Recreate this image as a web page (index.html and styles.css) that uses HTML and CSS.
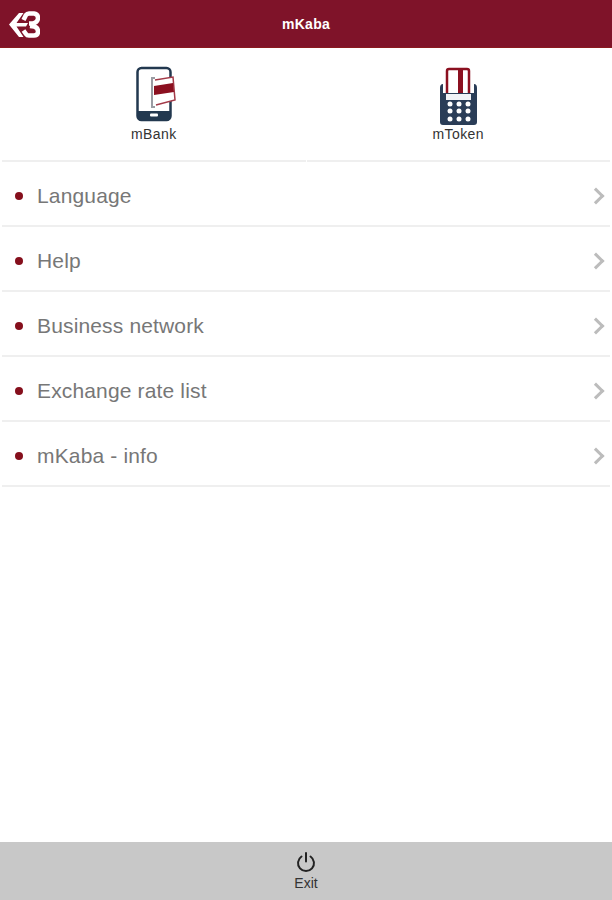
FILE: index.html
```html
<!DOCTYPE html>
<html lang="en">
  <head>
    <meta charset="UTF-8" />
    <meta name="viewport" content="width=device-width, initial-scale=1.0" />
    <title>mKaba</title>
    <link rel="stylesheet" href="styles.css">
  </head>

  <body>
    <header class="top-bar">
      <svg class="logo" width="32" height="28" viewBox="0 0 32 28">
        <path d="M11 2 L15.500 2 L8.500 12 L20 12 L18 15.500 L8.500 15.500 L15.500 26 L11 26 L1 13.500 Z" fill="#fff" />
        <path d="M15.500 9 L18 4 Q19 2.500 21 2.500 L26 2.500 Q30 3 30 7 Q30 11 25 12.500 L21 12.500" fill="none" stroke="#fff" stroke-width="4.500" />
        <path d="M20 8 L25 7.500" fill="none" stroke="#7f1329" stroke-width="1.500" />
        <path d="M22 15 L26 15.500 Q30 16.500 30 20.500 Q30 24.500 26 24.500 L21 24.500 Q19 24.500 18 23 L15.500 19.500" fill="none" stroke="#fff" stroke-width="4.500" />
        <path d="M20 20.500 L25 21" fill="none" stroke="#7f1329" stroke-width="1.500" />
      </svg>
      <h1>mKaba</h1>
    </header>

    <section class="tiles">
      <a class="tile">
        <svg class="phone-icon" width="44" height="56" viewBox="0 0 44 56">
          <rect x="5.500" y="2" width="33" height="52" rx="4" fill="#fff" stroke="#22384f" stroke-width="2.500" />
          <rect x="6" y="45" width="32" height="8" fill="#22384f" />
          <rect x="18" y="47.500" width="8" height="3" rx="1" fill="#fff" />
          <path d="M23 12 L20 12 L20 41 L23 41" fill="none" stroke="#9a9ca3" stroke-width="2" />
          <path d="M23 14 L41 11 L43 34 L24 39" fill="#fff" stroke="#a33a48" stroke-width="1.500" />
          <path d="M22 20 L41 17 L42 26 L22 29 Z" fill="#8b1020" />
        </svg>
        <span>mBank</span>
      </a>
      <a class="tile">
        <svg width="44" height="58" viewBox="-1 0 44 58">
          <rect x="10" y="2" width="22" height="26" rx="2" fill="#fff" stroke="#8b1020" stroke-width="2.500" />
          <rect x="21" y="3" width="5" height="25" fill="#8b1020" />
          <path d="M3 21 Q3 17 6 17 L6 26 L37 26 L37 17 Q40 17 40 21 L40 55 Q40 58 37 58 L6 58 Q3 58 3 55 Z" fill="#2a3d57" />
          <rect x="9" y="27" width="25" height="6" fill="#f1f3f7" />
          <g fill="#fff">
            <circle cx="13" cy="37" r="2.500" /><circle cx="22" cy="37" r="2.500" /><circle cx="31" cy="37" r="2.500" />
            <circle cx="13" cy="44" r="2.500" /><circle cx="22" cy="44" r="2.500" /><circle cx="31" cy="44" r="2.500" />
            <circle cx="13" cy="52" r="2.500" /><circle cx="22" cy="52" r="2.500" /><circle cx="31" cy="52" r="2.500" />
          </g>
        </svg>
        <span>mToken</span>
      </a>
    </section>

    <ul class="menu">
      <li class="menu-item"><span class="dot"></span><span class="menu-label">Language</span><span class="chevron"></span></li>
      <li class="menu-item"><span class="dot"></span><span class="menu-label">Help</span><span class="chevron"></span></li>
      <li class="menu-item"><span class="dot"></span><span class="menu-label">Business network</span><span class="chevron"></span></li>
      <li class="menu-item"><span class="dot"></span><span class="menu-label">Exchange rate list</span><span class="chevron"></span></li>
      <li class="menu-item"><span class="dot"></span><span class="menu-label">mKaba - info</span><span class="chevron"></span></li>
    </ul>

    <footer class="bottom-bar">
      <svg width="22" height="22" viewBox="0 0 22 22">
        <path d="M6.500 5.500 A8 8 0 1 0 15.500 5.500" fill="none" stroke="#222" stroke-width="2" stroke-linecap="round" />
        <path d="M11 2 L11 10.500" fill="none" stroke="#222" stroke-width="2" stroke-linecap="round" />
      </svg>
      <span>Exit</span>
    </footer>
  </body>
</html>
```

FILE: styles.css
```css
* {
  padding: 0;
  margin: 0;
  box-sizing: border-box;
}

body {
  display: flex;
  flex-direction: column;
  height: 100vh;
  background-color: #ffffff;
  font-family: "Liberation Sans", Arial, sans-serif;
}

.top-bar {
  display: flex;
  justify-content: center;
  align-items: center;
  position: relative;
  height: 48px;
  background-color: #7f1329;
  border-bottom: 1px solid #8a1a1e;
}

.top-bar h1 {
  font-size: 14px;
  font-weight: 700;
  letter-spacing: 0.3px;
  color: #ffffff;
}

.logo {
  position: absolute;
  left: 8px;
  top: 11px;
}

.tiles {
  display: flex;
  gap: 1px;
  height: 114px;
  padding: 0 2px;
}

.tile {
  display: flex;
  flex: 1;
  flex-direction: column;
  align-items: center;
  justify-content: flex-end;
  gap: 1px;
  padding-bottom: 18px;
  border-bottom: 2px solid #efefef;
  font-size: 14px;
  letter-spacing: 0.4px;
  color: #333333;
}

.phone-icon {
  margin-bottom: 3px;
}

.menu {
  list-style: none;
}

.menu-item {
  display: flex;
  align-items: center;
  height: 65px;
  margin: 0 2px;
  padding: 4px 5px 0 13px;
  border-bottom: 2px solid #efefef;
}

.dot {
  width: 8px;
  height: 8px;
  border-radius: 50%;
  background-color: #850f1c;
}

.menu-label {
  flex: 1;
  margin-left: 14px;
  font-size: 21px;
  letter-spacing: 0.15px;
  color: #777777;
}

.chevron {
  width: 12px;
  height: 12px;
  margin-right: 3px;
  border-top: 3px solid #bcbcbc;
  border-right: 3px solid #bcbcbc;
  transform: rotate(45deg);
}

.bottom-bar {
  display: flex;
  flex-direction: column;
  align-items: center;
  gap: 2px;
  margin-top: auto;
  height: 58px;
  padding-top: 9px;
  background-color: #c8c8c8;
  font-size: 14px;
  color: #333333;
}
```
